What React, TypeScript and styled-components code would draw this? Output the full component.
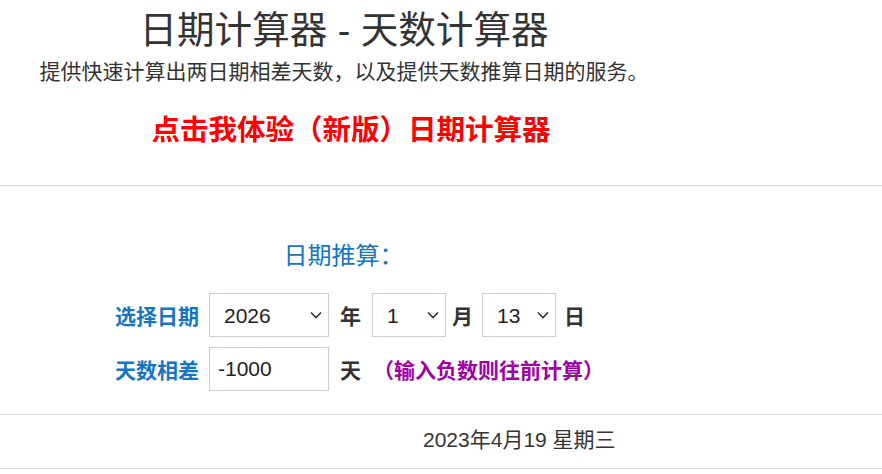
import React, { useState } from 'react'
import styled, { createGlobalStyle } from 'styled-components'

const GlobalStyle = createGlobalStyle`
  html, body {
    margin: 0;
    padding: 0;
    background: #ffffff;
    font-family: "Liberation Sans", "Noto Sans CJK SC", sans-serif;
    color: #333333;
  }
`

// 頁首
const Header = styled.header`
  width: 688px;
  text-align: center;
  padding-top: 7px;
`

const Title = styled.h1`
  margin: 0;
  font-size: 37.6px;
  font-weight: normal;
  line-height: 46px;
  color: #333333;
`

const Subtitle = styled.p`
  margin: 6px 0 0;
  font-size: 21px;
  line-height: 26px;
  color: #333333;
`

const NewLink = styled.a`
  display: block;
  margin-top: 27px;
  padding-left: 14px;
  font-size: 28.5px;
  font-weight: bold;
  line-height: 36px;
  color: #ff0000;
  text-decoration: none;
  cursor: pointer;
`

const Divider = styled.hr<{ $color: string; $top: number }>`
  border: 0;
  border-top: 1px solid ${(p) => p.$color};
  margin: ${(p) => p.$top}px 0 0;
`

// 表單
const Form = styled.section`
  width: 680px;
  padding-top: 53px;
`

const SectionTitle = styled.h2`
  margin: 0 0 20px;
  padding-left: 7px;
  text-align: center;
  font-size: 24px;
  font-weight: normal;
  line-height: 34px;
  color: #1475c3;
`

const Row = styled.div`
  display: flex;
  align-items: center;
  gap: 11px;
  margin-left: 115px;
  margin-bottom: 10px;
`

const Label = styled.span`
  flex: 0 0 83px;
  margin-right: -1px;
  white-space: nowrap;
  font-size: 21px;
  font-weight: bold;
  color: #1475c3;
`

const Unit = styled.span<{ $left?: number; $right?: number }>`
  margin-left: ${(p) => p.$left ?? 0}px;
  margin-right: ${(p) => p.$right ?? 0}px;
  white-space: nowrap;
  font-size: 21px;
  font-weight: bold;
  color: #333333;
`

const Hint = styled.span`
  margin-left: 1px;
  white-space: nowrap;
  font-size: 21px;
  font-weight: bold;
  color: #a000a6;
`

const SelectWrap = styled.div<{ $width: number }>`
  position: relative;
  flex: 0 0 ${(p) => p.$width}px;
  height: 44px;
`

const Select = styled.select`
  appearance: none;
  width: 100%;
  height: 100%;
  box-sizing: border-box;
  border: 1px solid #c8cfdb;
  background: #ffffff;
  padding: 0 0 0 14px;
  font-family: "Liberation Sans", "Noto Sans CJK SC", sans-serif;
  font-size: 21px;
  color: #222222;
  outline: none;
`

const Chevron = styled.svg`
  position: absolute;
  right: 7px;
  top: 18px;
  pointer-events: none;
`

const Input = styled.input`
  flex: 0 0 120px;
  width: 120px;
  height: 44px;
  box-sizing: border-box;
  border: 1px solid #c8cfdb;
  padding: 0 0 0 8px;
  font-family: "Liberation Sans", "Noto Sans CJK SC", sans-serif;
  font-size: 21px;
  color: #222222;
  outline: none;
`

const Result = styled.div`
  padding: 14px 0 17px 423px;
  font-size: 21px;
  line-height: 22px;
  color: #333333;
`

const DateSelect = ({ width, value, options }: { width: number; value: string; options: string[] }) => {
  const [v, setV] = useState(value)
  return (
    <SelectWrap $width={width}>
      <Select value={v} onChange={(e) => setV(e.target.value)}>
        {options.map((o) => (
          <option key={o} value={o}>
            {o}
          </option>
        ))}
      </Select>
      <Chevron width="12" height="8" viewBox="0 0 12 8">
        <path d="M1 1.5 L6 6.5 L11 1.5" fill="none" stroke="#333" strokeWidth="1.6" />
      </Chevron>
    </SelectWrap>
  )
}

const range = (a: number, b: number) => Array.from({ length: b - a + 1 }, (_, i) => String(a + i))

const App = () => {
  const [days, setDays] = useState('-1000')
  return (
    <>
      <GlobalStyle />
      <Header>
        <Title>日期计算器 - 天数计算器</Title>
        <Subtitle>提供快速计算出两日期相差天数，以及提供天数推算日期的服务。</Subtitle>
        <NewLink>点击我体验（新版）日期计算器</NewLink>
      </Header>
      <Divider $color="#c9d0de" $top={37} />
      <Form>
        <SectionTitle>日期推算：</SectionTitle>
        <Row>
          <Label>选择日期</Label>
          <DateSelect width={120} value="2026" options={range(1900, 2100)} />
          <Unit>年</Unit>
          <DateSelect width={74} value="1" options={range(1, 12)} />
          <Unit $left={-5} $right={-2}>月</Unit>
          <DateSelect width={74} value="13" options={range(1, 31)} />
          <Unit $left={-3}>日</Unit>
        </Row>
        <Row>
          <Label>天数相差</Label>
          <Input value={days} onChange={(e) => setDays(e.target.value)} />
          <Unit>天</Unit>
          <Hint>（输入负数则往前计算）</Hint>
        </Row>
      </Form>
      <Divider $color="#dddddd" $top={23} />
      <Result>2023年4月19 星期三</Result>
      <Divider $color="#dddddd" $top={0} />
    </>
  )
}

export default App
